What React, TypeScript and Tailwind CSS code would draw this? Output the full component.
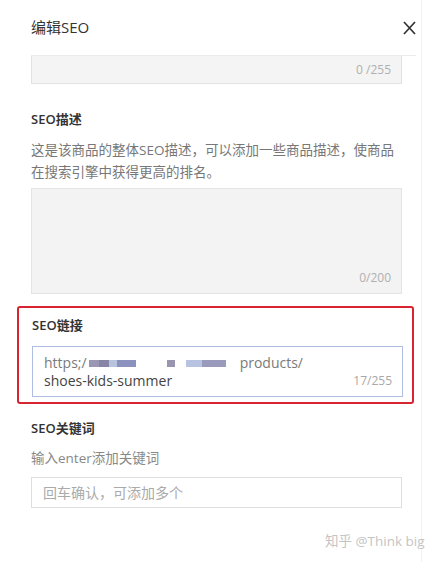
import React from "react";

const font = { fontFamily: '"Open Sans", "Noto Sans CJK SC", sans-serif' };

function Blur() {
  return (
    <span className="inline-flex items-center align-middle mx-[2px]">
      <span className="inline-flex h-[7px]">
        <span className="w-[10px] bg-[#9a97b4]" />
        <span className="w-[10px] bg-[#8784a6]" />
        <span className="w-[8px] bg-[#b8c3dd]" />
        <span className="w-[19px] bg-[#8a92bd]" />
      </span>
      <span className="w-[31px]" />
      <span className="inline-flex h-[7px]">
        <span className="w-[8px] bg-[#9995b0]" />
        <span className="w-[11px]" />
        <span className="w-[16px] bg-[#b7c3e0]" />
        <span className="w-[24px] bg-[#9a9abd]" />
      </span>
    </span>
  );
}

export default function App() {
  return (
    <div className="w-[439px] h-[562px] bg-white overflow-hidden relative text-[#333]" style={font}>
      <div className="w-[422px] h-full border-r border-[#f2f2f2] flex flex-col">
        <div className="h-[55px] flex items-start justify-between pl-[31px] pr-[5px] pt-[17px]">
          <span className="text-[15px] leading-[20px] text-[#333]">编辑SEO</span>
          <svg width="13" height="14" viewBox="0 0 13 14" className="mt-[4px]">
            <path d="M1 1 L12 13 M12 1 L1 13" stroke="#333" strokeWidth="1.7" />
          </svg>
        </div>
        <div className="mx-[31px] border-t border-[#ececec] w-[385px]" />
        <div className="px-[31px] flex flex-col">
          <div className="w-[371px] h-[28px] bg-[#f4f4f4] border border-t-0 border-[#e2e2e2] flex items-center justify-end pr-[10px]">
            <span className="text-[12px] text-[#b0b0b0]">0 /255</span>
          </div>
          <div className="mt-[25px] text-[13px] leading-[20px] font-semibold text-[#333]">SEO描述</div>
          <div className="mt-[10px] text-[13.5px] leading-[22px] text-[#777] w-[371px]">
            这是该商品的整体SEO描述，可以添加一些商品描述，使商品在搜索引擎中获得更高的排名。
          </div>
          <div className="mt-[5px] w-[371px] h-[106px] bg-[#f3f3f3] border border-[#e4e4e4] flex items-end justify-end pr-[10px] pb-[6px]">
            <span className="text-[12px] text-[#b0b0b0]">0/200</span>
          </div>
        </div>
        <div className="mt-[12px] ml-[17px] w-[397px] h-[98px] border-2 border-[#d92330] rounded-[3px] px-[13px] pt-[7px]">
          <div className="text-[13px] leading-[20px] font-semibold text-[#333]">SEO链接</div>
          <div className="mt-[11px] w-[371px] h-[51px] border border-[#aebde0] relative px-[11px] pt-[7px]">
            <div className="text-[14px] leading-[18px] text-[#7a7a7a] flex items-center">
              <span>https;/</span>
              <Blur />
              <span className="ml-[12px]">products/</span>
            </div>
            <div className="text-[14px] leading-[18px] text-[#444]">shoes-kids-summer</div>
            <span className="absolute right-[10px] bottom-[6px] text-[12px] text-[#a8a8a8]">17/255</span>
          </div>
        </div>
        <div className="px-[31px] flex flex-col">
          <div className="mt-[14px] text-[13px] leading-[20px] font-semibold text-[#333]">SEO关键词</div>
          <div className="mt-[10px] text-[13.5px] leading-[20px] text-[#888]">输入enter添加关键词</div>
          <div className="mt-[9px] w-[371px] h-[31px] border border-[#dedede] flex items-center pl-[11px]">
            <span className="text-[14px] text-[#aaa]">回车确认，可添加多个</span>
          </div>
        </div>
      </div>
      <div className="absolute left-[325px] top-[532px] text-[13.5px] leading-[18px] text-[#c4c4c4]">知乎 @Think big</div>
    </div>
  );
}
